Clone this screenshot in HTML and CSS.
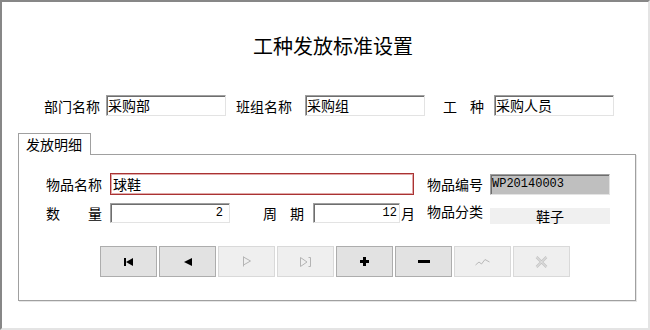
FILE: index.html
```html
<!DOCTYPE html>
<html lang="zh-CN">
<head>
<meta charset="utf-8">
<title>工种发放标准设置</title>
<link rel="stylesheet" href="styles.css">
</head>
<body>
<div class="window">
  <h1 class="title">工种发放标准设置</h1>

  <div class="top-row">
    <span class="lbl lbl-dept">部门名称</span>
    <div class="field f-dept">采购部</div>
    <span class="lbl lbl-group">班组名称</span>
    <div class="field f-group">采购组</div>
    <span class="lbl spaced lbl-type"><span>工</span><span>种</span></span>
    <div class="field f-type">采购人员</div>
  </div>

  <div class="tabs">
    <div class="tab">发放明细</div>
  </div>

  <div class="panel">
    <div class="prow prow-a">
      <span class="lbl">物品名称</span>
      <div class="field field-active f-name">球鞋</div>
      <span class="lbl lbl-code">物品编号</span>
      <div class="field field-readonly f-code">WP20140003</div>
    </div>

    <div class="prow prow-b">
      <span class="lbl spaced"><span>数</span><span>量</span></span>
      <div class="field num f-qty">2</div>
      <span class="lbl spaced lbl-cycle"><span>周</span><span>期</span></span>
      <div class="field num f-cycle">12</div>
      <span class="unit">月</span>
      <span class="lbl lbl-cat">物品分类</span>
      <div class="cat-box">鞋子</div>
    </div>

    <div class="toolbar">
      <button class="btn" type="button" aria-label="第一条">
        <svg width="10" height="8" viewBox="0 0 10 8"><rect x="0" y="0" width="2" height="8" fill="#000"/><path d="M2 4 L9 0 V8 Z" fill="#000"/></svg>
      </button>
      <button class="btn" type="button" aria-label="上一条">
        <svg width="8" height="8" viewBox="0 0 8 8"><path d="M0 4 L8 0 V8 Z" fill="#000"/></svg>
      </button>
      <button class="btn btn-off" type="button" aria-label="下一条">
        <svg width="10" height="11" viewBox="0 0 10 11"><path d="M1.5 0.5 V10.5 M1.5 1 L8.5 5 L1.5 9" fill="none" stroke="#b4b4b4" stroke-width="1"/></svg>
      </button>
      <button class="btn btn-off" type="button" aria-label="最后一条">
        <svg width="14" height="12" viewBox="0 0 14 12"><path d="M1.5 1.5 V10.5 M1.5 1.5 L8 6 L1.5 10.5 M11.5 1.5 V10.5 M9.5 1.5 H11.5 M9.5 10.5 H11.5" fill="none" stroke="#b4b4b4" stroke-width="1"/></svg>
      </button>
      <button class="btn" type="button" aria-label="添加">
        <svg width="9" height="9" viewBox="0 0 9 9"><rect x="0" y="3" width="9" height="3" fill="#000"/><rect x="3" y="0" width="3" height="9" fill="#000"/></svg>
      </button>
      <button class="btn" type="button" aria-label="删除">
        <svg width="12" height="3" viewBox="0 0 12 3"><rect x="0" y="0" width="12" height="3" fill="#000"/></svg>
      </button>
      <button class="btn btn-off" type="button" aria-label="保存">
        <svg width="15" height="8" viewBox="0 0 15 8"><path d="M0.5 7 L4 4 L6.5 6 L10 1.5 L14.5 4" fill="none" stroke="#b8b8b8" stroke-width="1"/></svg>
      </button>
      <button class="btn btn-off" type="button" aria-label="取消">
        <svg width="13" height="12" viewBox="0 0 13 12"><path d="M1.5 1 L11.5 11 M11.5 1 L1.5 11" fill="none" stroke="#c4c4c4" stroke-width="2.5"/><path d="M1.5 1 L11.5 11 M11.5 1 L1.5 11" fill="none" stroke="#efefef" stroke-width="0.8"/></svg>
      </button>
    </div>
  </div>
</div>
</body>
</html>
```

FILE: styles.css
```css
* {
  box-sizing: border-box;
}

html,
body {
  margin: 0;
  padding: 0;
  background: #fff;
}

body {
  font-family: "Noto Sans CJK SC", "Noto Sans", sans-serif;
  font-size: 14px;
  color: #000;
}

.window {
  width: 650px;
  height: 330px;
  border-style: solid;
  border-width: 2px;
  border-color: #878787 #e4e4e4 #e4e4e4 #878787;
  background: #fff;
}

.title {
  margin: 32px 0 0;
  padding-left: 16px;
  height: 24px;
  line-height: 24px;
  font-size: 20px;
  font-weight: normal;
  text-align: center;
}

/* generic label + field */
.lbl {
  width: 56px;
  white-space: nowrap;
  line-height: 20px;
}

.spaced {
  display: flex;
  justify-content: space-between;
}

.field {
  height: 21px;
  line-height: 19px;
  padding: 0 1px;
  border: 1px solid;
  border-color: #a0a0a0 #e3e3e3 #e3e3e3 #a0a0a0;
  box-shadow: inset 1px 1px 0 #6e6e6e;
  background: #fff;
  white-space: nowrap;
  overflow: hidden;
}

/* top row */
.top-row {
  display: flex;
  align-items: center;
  height: 21px;
  margin-top: 37px;
}

.lbl-dept {
  margin-left: 42px;
}

.f-dept {
  margin-left: 6px;
  width: 120px;
}

.lbl-group {
  margin-left: 10px;
}

.f-group {
  margin-left: 13px;
  width: 120px;
}

.lbl-type {
  margin-left: 18px;
  width: 41px;
}

.f-type {
  margin-left: 10px;
  width: 120px;
}

/* tabs */
.tabs {
  display: flex;
  margin: 17px 0 0 16px;
}

.tab {
  position: relative;
  z-index: 1;
  width: 73px;
  height: 22px;
  margin-bottom: -1px;
  padding-left: 7px;
  line-height: 20px;
  border: 1px solid #a0a0a0;
  border-bottom: none;
  background: #fff;
  white-space: nowrap;
}

/* panel */
.panel {
  width: 618px;
  height: 147px;
  margin-left: 16px;
  padding: 18px 0 0 27px;
  border: 1px solid #a0a0a0;
  box-shadow: 1px 1px 0 #e6e6e6;
}

.prow {
  display: flex;
  align-items: center;
}

.prow-a {
  height: 22px;
}

.prow-b {
  height: 20px;
  margin-top: 8px;
}

.f-name {
  width: 304px;
  height: 22px;
  margin-left: 8px;
  line-height: 20px;
}

.field-active {
  border: 1px solid #a93333;
  box-shadow: inset 0 0 0 1px #e2a9a9;
  padding-left: 2px;
}

.lbl-code {
  margin-left: 13px;
}

.f-code {
  width: 120px;
  margin-left: 7px;
  height: 21px;
  font-family: "Liberation Mono", "DejaVu Sans Mono", monospace;
  font-size: 12px;
  background: #bfbfbf;
}

.num {
  height: 20px;
  line-height: 18px;
  text-align: right;
  font-family: "Liberation Mono", "DejaVu Sans Mono", monospace;
  font-size: 12px;
}

.f-qty {
  width: 120px;
  margin-left: 8px;
  padding-right: 6px;
}

.lbl-cycle {
  width: 41px;
  margin-left: 33px;
}

.f-cycle {
  width: 87px;
  margin-left: 9px;
  padding-right: 2px;
}

.unit {
  margin-left: 1px;
  line-height: 20px;
}

.lbl-cat {
  margin-left: 12px;
  align-self: flex-start;
  line-height: 16px;
}

.cat-box {
  width: 120px;
  height: 16px;
  margin-left: 7px;
  margin-top: 6px;
  line-height: 16px;
  text-align: center;
  background: #f0f0f0;
}

/* toolbar */
.toolbar {
  display: flex;
  gap: 2px;
  margin: 23px 0 0 54px;
}

.btn {
  display: flex;
  align-items: center;
  justify-content: center;
  width: 57px;
  height: 31px;
  padding: 0;
  border: 1px solid #adadad;
  background: #e2e2e2;
  font: inherit;
}

.btn-off {
  border-color: #d9d9d9;
  background: #efefef;
}
```
